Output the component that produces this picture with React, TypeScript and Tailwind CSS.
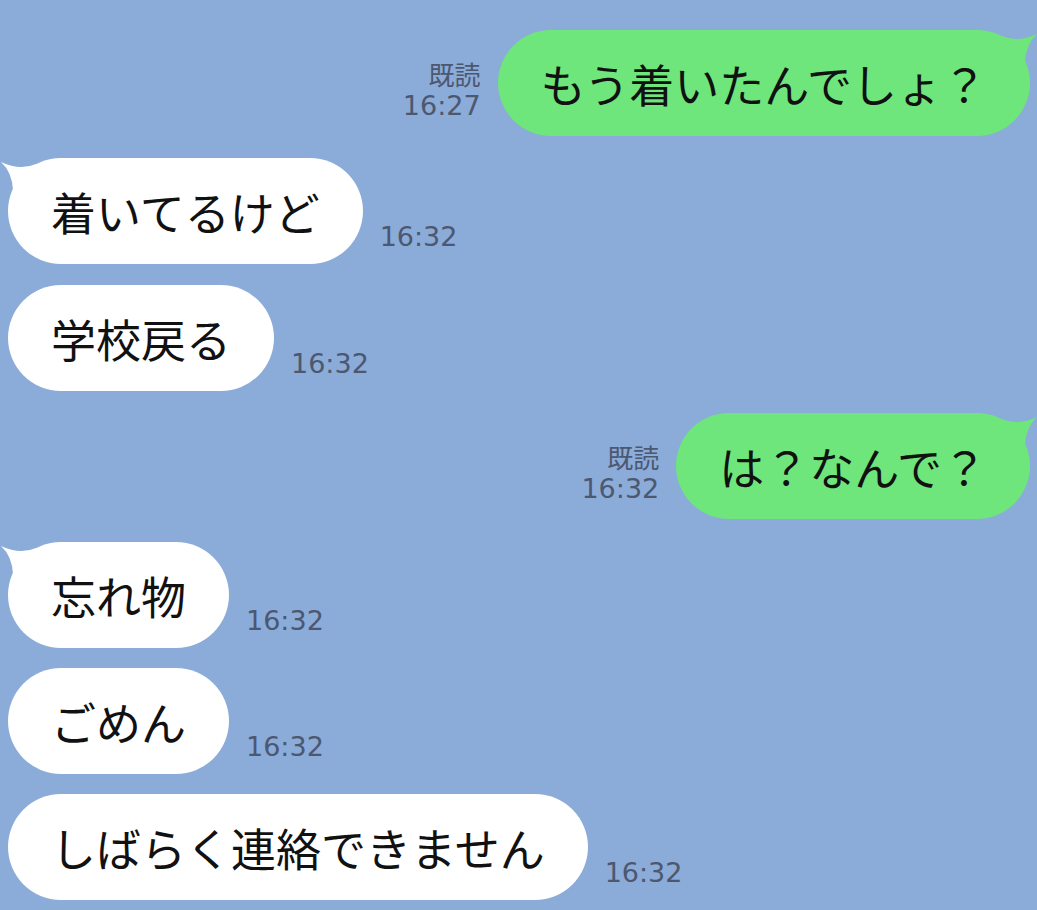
type Msg = {
  id: number;
  side: 'me' | 'them';
  text: string;
  time: string;
  tail: boolean;
  gap: string;
};

const MESSAGES: Msg[] = [
  { id: 1, side: 'me', text: 'もう着いたんでしょ？', time: '16:27', tail: true, gap: 'mt-[30px]' },
  { id: 2, side: 'them', text: '着いてるけど', time: '16:32', tail: true, gap: 'mt-[22px]' },
  { id: 3, side: 'them', text: '学校戻る', time: '16:32', tail: false, gap: 'mt-[21px]' },
  { id: 4, side: 'me', text: 'は？なんで？', time: '16:32', tail: true, gap: 'mt-[22px]' },
  { id: 5, side: 'them', text: '忘れ物', time: '16:32', tail: true, gap: 'mt-[23px]' },
  { id: 6, side: 'them', text: 'ごめん', time: '16:32', tail: false, gap: 'mt-[20px]' },
  { id: 7, side: 'them', text: 'しばらく連絡できません', time: '16:32', tail: false, gap: 'mt-[20px]' },
];

const JP = "font-['Noto_Sans_CJK_JP',sans-serif]";
const TIME = "font-['DejaVu_Sans','Noto_Sans_CJK_JP',sans-serif]";

function Tail({ side, color }: { side: 'me' | 'them'; color: string }) {
  // little horn on the top corner of the first bubble in a group
  if (side === 'them') {
    return (
      <svg className="absolute -left-2 top-0" width="40" height="34" viewBox="0 0 40 34">
        <path d="M1,4 Q20,13 36,6 L36,32 L13,32 Q12,14 1,4 Z" fill={color} />
      </svg>
    );
  }
  return (
    <svg className="absolute -right-2 top-0" width="40" height="34" viewBox="0 0 40 34">
      <path d="M39,4 Q20,13 4,6 L4,32 L27,32 Q28,14 39,4 Z" fill={color} />
    </svg>
  );
}

function Bubble({ msg }: { msg: Msg }) {
  const mine = msg.side === 'me';
  const color = mine ? '#6ee67b' : '#ffffff';
  return (
    <div
      className={`relative flex h-[106px] items-center rounded-full px-[43px] text-[45px] leading-none text-[#111] ${JP} ${
        mine ? 'bg-[#6ee67b]' : 'bg-white'
      }`}
    >
      {msg.tail && <Tail side={msg.side} color={color} />}
      <span className="relative whitespace-nowrap">{msg.text}</span>
    </div>
  );
}

function Row({ msg }: { msg: Msg }) {
  if (msg.side === 'me') {
    return (
      <div className={`flex items-end justify-end gap-[17px] pr-[7px] ${msg.gap}`}>
        <div className="flex flex-col items-end pb-[15px] text-[#4b5870]">
          <span className={`text-[26px] leading-[34px] ${JP}`}>既読</span>
          <span className={`text-[27px] leading-[30px] ${TIME}`}>{msg.time}</span>
        </div>
        <Bubble msg={msg} />
      </div>
    );
  }
  return (
    <div className={`flex items-end gap-[17px] pl-[8px] ${msg.gap}`}>
      <Bubble msg={msg} />
      <span className={`pb-[12px] text-[27px] leading-[30px] text-[#4b5870] ${TIME}`}>{msg.time}</span>
    </div>
  );
}

export default function App() {
  return (
    <div className="flex h-[910px] w-full flex-col overflow-hidden bg-[#8babd9]">
      {MESSAGES.map((m) => (
        <Row key={m.id} msg={m} />
      ))}
    </div>
  );
}
